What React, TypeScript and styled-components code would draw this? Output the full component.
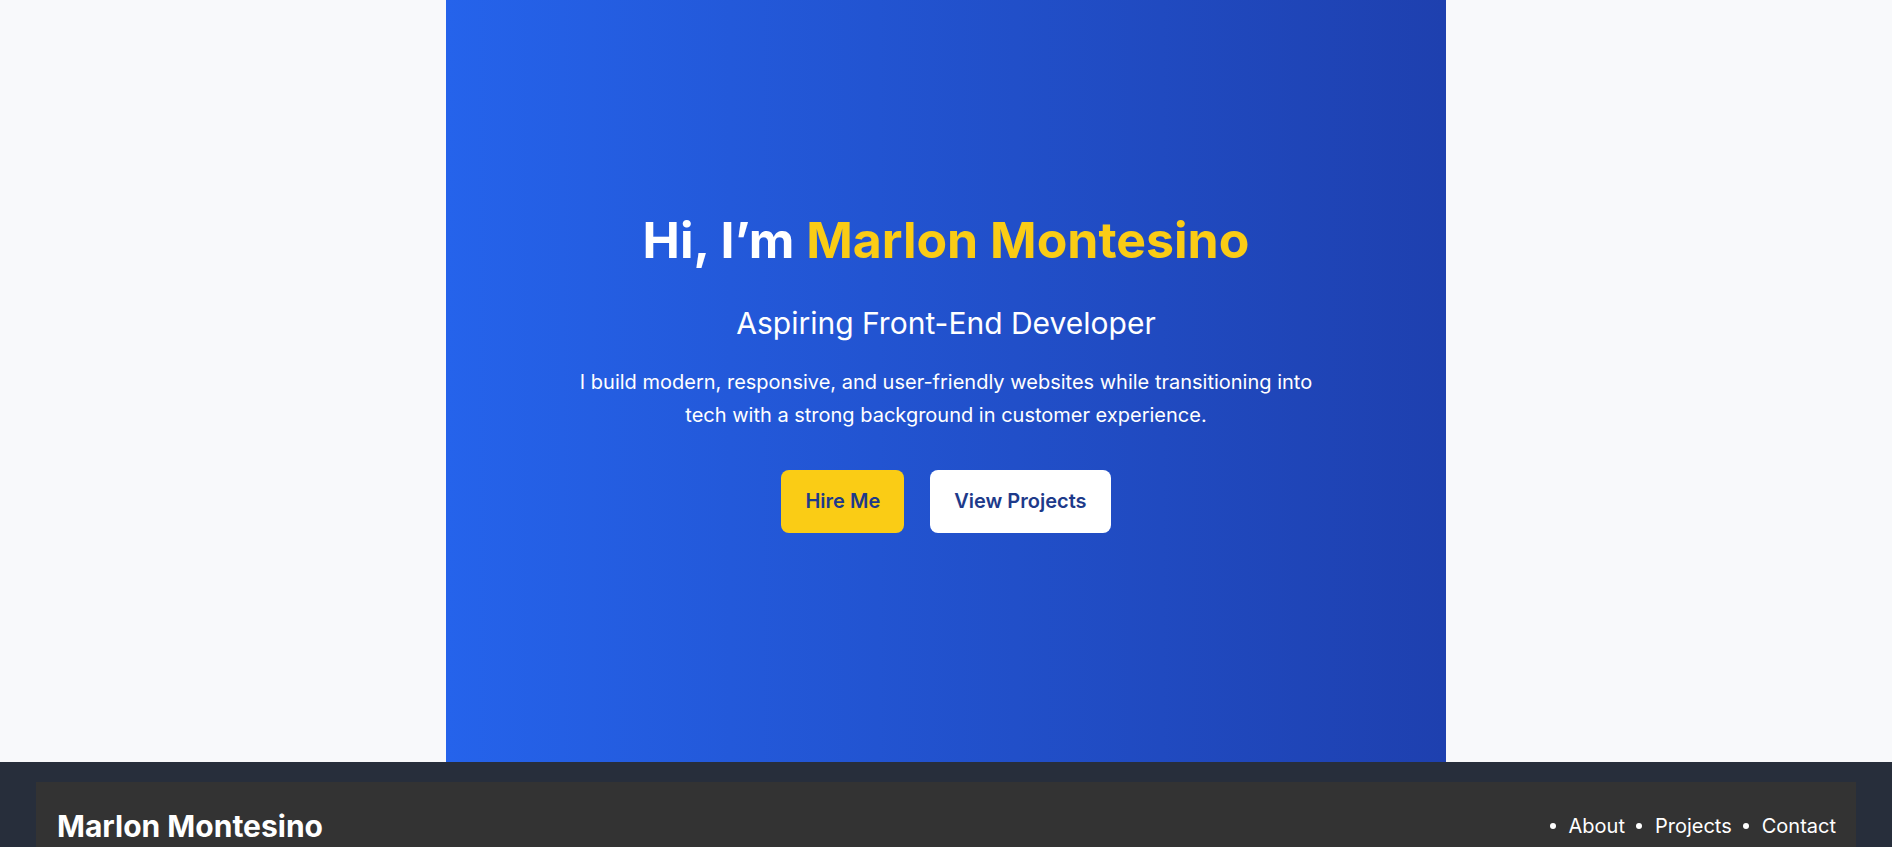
import React from "react";
import styled, { createGlobalStyle } from "styled-components";

const Global = createGlobalStyle`
  * { box-sizing: border-box; }
  html, body { margin: 0; padding: 0; }
  body {
    background: #f8f9fb;
    font-family: Inter, "Noto Sans", sans-serif;
    color: #1f2937;
  }
`;

const Page = styled.div`
  display: flex;
  flex-direction: column;
  align-items: center;
`;

const Hero = styled.section`
  width: 1000px;
  min-height: 90vh;
  background: linear-gradient(90deg, #2563eb 0%, #1e40af 100%);
  color: #ffffff;
  display: flex;
  flex-direction: column;
  align-items: center;
  justify-content: center;
  text-align: center;
  padding: 0 40px 20px;
`;

const Title = styled.h1`
  margin: 0 0 34px;
  font-size: 50px;
  font-weight: 700;
  line-height: 60px;
`;

const Highlight = styled.span`
  color: #facc15;
`;

const Subtitle = styled.h2`
  margin: 0 0 23px;
  font-size: 30px;
  font-weight: 400;
  line-height: 39px;
`;

const Lead = styled.p`
  margin: 0 0 38px;
  max-width: 750px;
  font-size: 20px;
  line-height: 33px;
`;

const Actions = styled.div`
  display: flex;
  gap: 26px;
`;

const Button = styled.a<{ $variant: "primary" | "secondary" }>`
  display: inline-flex;
  align-items: center;
  justify-content: center;
  height: 63px;
  padding: 0 24px;
  border-radius: 8px;
  font-size: 20px;
  font-weight: 600;
  color: #1e3a8a;
  text-decoration: none;
  background: ${(p) => (p.$variant === "primary" ? "#facc15" : "#ffffff")};
`;

const Footer = styled.footer`
  align-self: stretch;
  background: #272e3b;
  padding: 20px 36px 0;
`;

const FooterBar = styled.div`
  background: #333333;
  padding: 26px 20px 20px 21px;
  display: flex;
  justify-content: space-between;
  align-items: center;
  color: #ffffff;
`;

const Brand = styled.div`
  font-size: 30px;
  font-weight: 700;
  line-height: 36px;
`;

const NavList = styled.ul`
  list-style: none;
  margin: 0;
  padding: 0;
  display: flex;
  gap: 11px;
`;

const NavItem = styled.li`
  font-size: 20px;
  line-height: 24px;
  display: flex;
  align-items: center;
  &::before {
    content: "";
    width: 6px;
    height: 6px;
    border-radius: 50%;
    background: #ffffff;
    margin-right: 13px;
  }
`;

export default function App() {
  return (
    <>
      <Global />
      <Page>
        <Hero>
          <Title>
            Hi, I’m <Highlight>Marlon Montesino</Highlight>
          </Title>
          <Subtitle>Aspiring Front-End Developer</Subtitle>
          <Lead>
            I build modern, responsive, and user-friendly websites while transitioning into
            tech with a strong background in customer experience.
          </Lead>
          <Actions>
            <Button $variant="primary" href="#contact">Hire Me</Button>
            <Button $variant="secondary" href="#projects">View Projects</Button>
          </Actions>
        </Hero>
        <Footer>
          <FooterBar>
            <Brand>Marlon Montesino</Brand>
            <NavList>
              <NavItem>About</NavItem>
              <NavItem>Projects</NavItem>
              <NavItem>Contact</NavItem>
            </NavList>
          </FooterBar>
        </Footer>
      </Page>
    </>
  );
}
